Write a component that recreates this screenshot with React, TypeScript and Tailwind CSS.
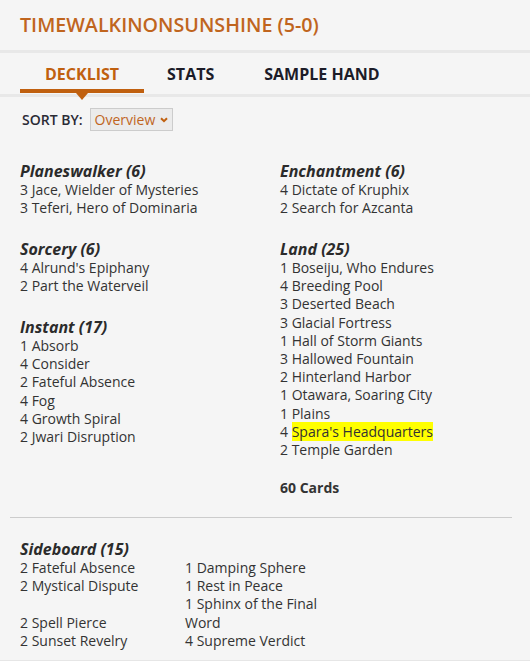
import React from "react";

const font = { fontFamily: '"Open Sans", "Liberation Sans", sans-serif' };

type Section = { title: string; cards: React.ReactNode[] };

const left: Section[] = [
  { title: "Planeswalker (6)", cards: ["3 Jace, Wielder of Mysteries", "3 Teferi, Hero of Dominaria"] },
  { title: "Sorcery (6)", cards: ["4 Alrund's Epiphany", "2 Part the Waterveil"] },
  {
    title: "Instant (17)",
    cards: ["1 Absorb", "4 Consider", "2 Fateful Absence", "4 Fog", "4 Growth Spiral", "2 Jwari Disruption"],
  },
];

const right: Section[] = [
  { title: "Enchantment (6)", cards: ["4 Dictate of Kruphix", "2 Search for Azcanta"] },
  {
    title: "Land (25)",
    cards: [
      "1 Boseiju, Who Endures",
      "4 Breeding Pool",
      "3 Deserted Beach",
      "3 Glacial Fortress",
      "1 Hall of Storm Giants",
      "3 Hallowed Fountain",
      "2 Hinterland Harbor",
      "1 Otawara, Soaring City",
      "1 Plains",
      <span key="spara">
        4 <span className="bg-[#ffff00]">Spara's Headquarters</span>
      </span>,
      "2 Temple Garden",
    ],
  },
];

const sideboard: [string, string][] = [
  ["2 Fateful Absence", "1 Damping Sphere"],
  ["2 Mystical Dispute", "1 Rest in Peace"],
  ["2 Spell Pierce", "1 Sphinx of the Final Word"],
  ["2 Sunset Revelry", "4 Supreme Verdict"],
];

function SectionBlock({ s }: { s: Section }) {
  return (
    <div className="mb-[21.6px]">
      <div className="text-[16px] leading-[20px] font-bold italic text-[#2b2b2b]">{s.title}</div>
      {s.cards.map((c, i) => (
        <div key={i} className="text-[14px] leading-[18.2px] text-[#333333]">
          {c}
        </div>
      ))}
    </div>
  );
}

export default function App() {
  return (
    <div style={font} className="w-[530px] min-h-[670px] bg-white">
      <div className="bg-[#f5f5f5] pb-[10px]">
        <div className="h-[50px] flex items-center px-[20px]">
          <span className="text-[19.7px] font-semibold text-[#c0651e]">TIMEWALKINONSUNSHINE (5-0)</span>
        </div>
        <div className="h-[3px] bg-[#e8e8e8]" />
        <div className="h-[41px] flex px-[20px]">
          <div className="relative flex flex-col">
            <div className="px-[25px] pt-[9px] h-[36px] text-[16px] leading-[24px] font-bold text-[#c0600f]">
              DECKLIST
            </div>
            <div className="h-[4px] bg-[#c0600f]" />
            <div className="absolute left-1/2 -translate-x-1/2 top-[40px] w-0 h-0 border-l-[6px] border-r-[6px] border-t-[7px] border-l-transparent border-r-transparent border-t-[#c0600f] z-10" />
          </div>
          <div className="pl-[23px] pr-[25px] pt-[9px] text-[16px] leading-[24px] font-bold text-[#1c1c28]">STATS</div>
          <div className="px-[25px] pt-[9px] text-[16px] leading-[24px] font-bold text-[#1c1c28]">SAMPLE HAND</div>
        </div>
        <div className="h-[3px] bg-[#e8e8e8]" />
        <div className="flex items-center pt-[11px] px-[22px] gap-[7px]">
          <span className="text-[14px] font-semibold text-[#2b2b35]">SORT BY:</span>
          <div className="h-[23px] w-[83px] border border-[#cccccc] bg-[#ebebeb] flex items-center pl-[4px] gap-[5px]">
            <span className="text-[14px] text-[#c0651e]">Overview</span>
            <svg width="8" height="6" viewBox="0 0 8 6">
              <path d="M1 1.2 L4 4.2 L7 1.2" stroke="#c0600f" strokeWidth="2" fill="none" />
            </svg>
          </div>
        </div>
        <div className="flex mt-[30px] px-[20px]">
          <div className="w-[260px]">
            {left.map((s) => (
              <SectionBlock key={s.title} s={s} />
            ))}
          </div>
          <div className="w-[230px]">
            {right.map((s) => (
              <SectionBlock key={s.title} s={s} />
            ))}
            <div className="-mt-[2px] text-[14px] leading-[18.2px] font-bold text-[#333333]">60 Cards</div>
          </div>
        </div>
        <div className="mx-[10px] mt-[20px] h-[1px] bg-[#cccccc] w-[502px]" />
        <div className="px-[20px] mt-[21px]">
          <div className="text-[16px] leading-[20px] font-bold italic text-[#2b2b2b]">Sideboard (15)</div>
          <div className="grid grid-cols-[165px_150px] items-end">
            {sideboard.map(([a, b], i) => (
              <React.Fragment key={i}>
                <div className="text-[14px] leading-[18.2px] text-[#333333]">{a}</div>
                <div className="text-[14px] leading-[18.2px] text-[#333333]">{b}</div>
              </React.Fragment>
            ))}
          </div>
        </div>
      </div>
      <div className="h-[1px] bg-[#e6e6e6]" />
    </div>
  );
}
